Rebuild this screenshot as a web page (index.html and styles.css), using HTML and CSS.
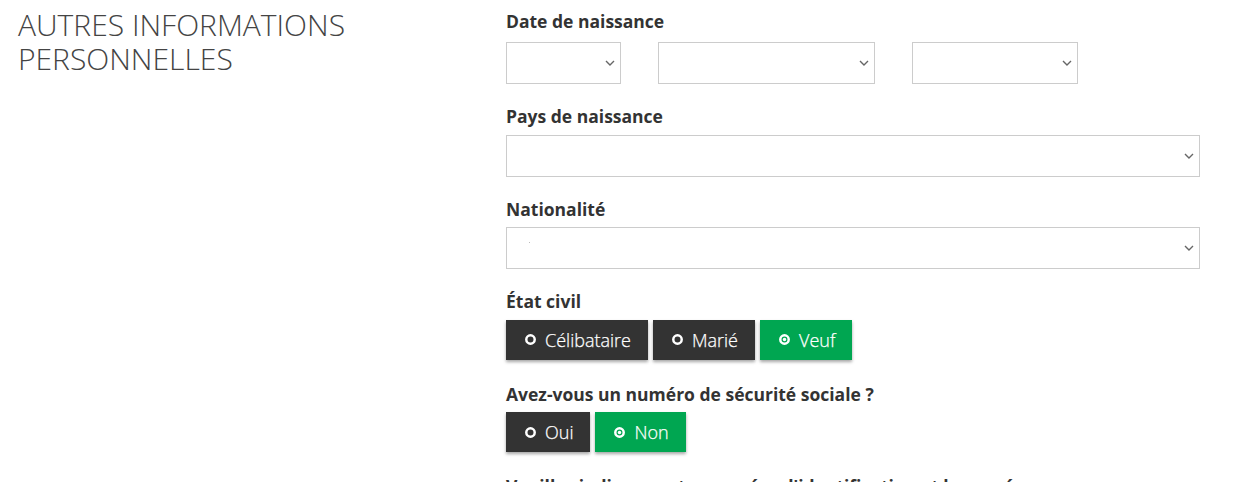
FILE: index.html
```html
<!DOCTYPE html>
<html lang="fr">
<head>
<meta charset="utf-8">
<title>Autres informations personnelles</title>
<link rel="stylesheet" href="styles.css">
</head>
<body>
<div class="page">
  <div class="side">
    <h2 class="section-title">AUTRES INFORMATIONS<br>PERSONNELLES</h2>
  </div>
  <div class="form">
    <div class="group">
      <div class="label">Date de naissance</div>
      <div class="date-row">
        <div class="select w-day"><svg class="chev" viewBox="0 0 10 6"><path d="M1 1l4 4 4-4"/></svg></div>
        <div class="select w-month"><svg class="chev" viewBox="0 0 10 6"><path d="M1 1l4 4 4-4"/></svg></div>
        <div class="select w-year"><svg class="chev" viewBox="0 0 10 6"><path d="M1 1l4 4 4-4"/></svg></div>
      </div>
    </div>
    <div class="group">
      <div class="label">Pays de naissance</div>
      <div class="select full"><svg class="chev" viewBox="0 0 10 6"><path d="M1 1l4 4 4-4"/></svg></div>
    </div>
    <div class="group">
      <div class="label">Nationalité</div>
      <div class="select full"><span class="speck"></span><svg class="chev" viewBox="0 0 10 6"><path d="M1 1l4 4 4-4"/></svg></div>
    </div>
    <div class="group btn-group">
      <div class="label">État civil</div>
      <div class="btns">
        <span class="btn dark"><svg class="radio" viewBox="0 0 12 12"><circle cx="6" cy="6" r="4.6"/></svg>Célibataire</span>
        <span class="btn dark"><svg class="radio" viewBox="0 0 12 12"><circle cx="6" cy="6" r="4.6"/></svg>Marié</span>
        <span class="btn green"><svg class="radio" viewBox="0 0 12 12"><circle cx="6" cy="6" r="4.6"/><circle class="dot" cx="6" cy="6" r="1.9"/></svg>Veuf</span>
      </div>
    </div>
    <div class="group btn-group">
      <div class="label">Avez-vous un numéro de sécurité sociale ?</div>
      <div class="btns">
        <span class="btn dark"><svg class="radio" viewBox="0 0 12 12"><circle cx="6" cy="6" r="4.6"/></svg>Oui</span>
        <span class="btn green"><svg class="radio" viewBox="0 0 12 12"><circle cx="6" cy="6" r="4.6"/><circle class="dot" cx="6" cy="6" r="1.9"/></svg>Non</span>
      </div>
    </div>
    <div class="group">
      <div class="label">Veuillez indiquer votre numéro d'identification et le numéro</div>
    </div>
  </div>
</div>
</body>
</html>
```
FILE: styles.css
```css
html, body {
  margin: 0;
  padding: 0;
  background: #fff;
  overflow: hidden;
  height: 482px;
}
body {
  font-family: "Open Sans", "Liberation Sans", sans-serif;
  color: #333;
}
.page {
  display: grid;
  grid-template-columns: 488px 694px;
  padding-left: 18px;
}
.section-title {
  margin: 0;
  padding-top: 8px;
  font-weight: 300;
  font-size: 30px;
  line-height: 34px;
  color: #444;
}
.form {
  padding-top: 9px;
}
.group {
  margin-bottom: 20px;
}
.btn-group {
  margin-bottom: 22px;
}
.label {
  font-size: 17.5px;
  font-weight: 700;
  line-height: 24px;
  color: #333;
  margin-bottom: 6.5px;
  white-space: nowrap;
}
.date-row {
  display: flex;
  gap: 37px;
  padding-top: 2.5px;
}
.select {
  box-sizing: border-box;
  height: 42px;
  border: 1px solid #ccc;
  background: #fff;
  display: flex;
  align-items: center;
  justify-content: flex-end;
  padding-right: 5px;
  position: relative;
}
.select.full {
  width: 694px;
}
.w-day { width: 115px; }
.w-month { width: 217px; }
.w-year { width: 166px; }
.chev {
  width: 10px;
  height: 6px;
  fill: none;
  stroke: #666;
  stroke-width: 1.4;
}
.speck {
  position: absolute;
  left: 22px;
  top: 14px;
  width: 1px;
  height: 1px;
  background: #bbb;
}
.btns {
  display: flex;
  gap: 5px;
}
.btn {
  box-sizing: border-box;
  height: 40px;
  display: inline-flex;
  align-items: center;
  padding: 0 17px 0 19px;
  font-size: 18px;
  font-weight: 300;
  color: #fff;
  -webkit-text-stroke: 0.25px #fff;
  box-shadow: 0 2px 3px rgba(0, 0, 0, 0.35);
}
.btn.dark { background: #333; }
.btn.green { background: #00a651; }
.radio {
  width: 11px;
  height: 11px;
  margin-right: 9px;
  fill: none;
  stroke: #fff;
  stroke-width: 2.7;
}
.radio .dot {
  fill: #fff;
  stroke: none;
}
```
